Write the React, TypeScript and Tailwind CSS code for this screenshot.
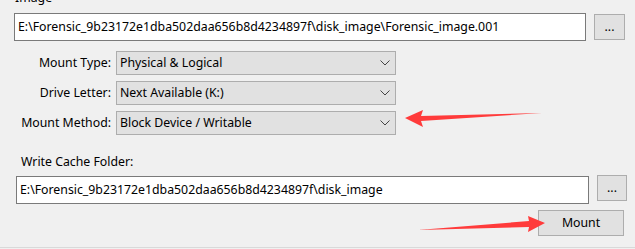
import React from "react";

const font = { fontFamily: '"Noto Sans", "Open Sans", sans-serif' };

function Chevron() {
  return (
    <svg width="10" height="6" viewBox="0 0 10 6" className="block">
      <path d="M0.5 0.5 L5 5 L9.5 0.5" fill="none" stroke="#444" strokeWidth="1" />
    </svg>
  );
}

function Combo({ text }: { text: string }) {
  return (
    <div className="w-[280px] h-[24px] bg-[#e1e1e1] border border-[#adadad] flex items-center justify-between pl-[3px] pr-[5px]">
      <span className="text-[12.3px] text-black leading-none">{text}</span>
      <Chevron />
    </div>
  );
}

export default function App() {
  return (
    <div
      className="relative w-[635px] h-[249px] bg-[#f0f0f0] overflow-hidden text-black text-[12.3px]"
      style={font}
    >
      <div className="flex flex-col">
        <div className="pl-[15px] -mt-[10px] h-[23px] leading-[16px]">Image</div>
        <div className="flex items-center pl-[14px]">
          <div className="w-[572px] h-[28px] bg-white border border-[#7a7a7a] flex items-center pl-[3px] whitespace-nowrap overflow-hidden">
            E:\Forensic_9b23172e1dba502daa656b8d4234897f\disk_image\Forensic_image.001
          </div>
          <div className="ml-[8px] w-[31px] h-[26px] bg-[#e1e1e1] border border-[#adadad] flex items-center justify-center">
            ...
          </div>
        </div>
        <div className="mt-[10px] flex flex-col gap-[6px]">
          {[
            ["Mount Type:", "Physical & Logical"],
            ["Drive Letter:", "Next Available (K:)"],
            ["Mount Method:", "Block Device / Writable"],
          ].map(([l, v]) => (
            <div key={l} className="flex items-center">
              <div className="w-[111px] text-right whitespace-nowrap">{l}</div>
              <div className="ml-[5px]">
                <Combo text={v} />
              </div>
            </div>
          ))}
        </div>
        <div className="mt-[19px] pl-[21px] leading-[16px] h-[18px]">Write Cache Folder:</div>
        <div className="mt-[3px] flex items-start pl-[16px]">
          <div className="mt-[1px] w-[573px] h-[28px] bg-white border border-[#7a7a7a] flex items-center pl-[3px] whitespace-nowrap overflow-hidden">
            E:\Forensic_9b23172e1dba502daa656b8d4234897f\disk_image
          </div>
          <div className="ml-[8px] w-[30px] h-[26px] bg-[#e1e1e1] border border-[#adadad] flex items-center justify-center">
            ...
          </div>
        </div>
        <div className="mt-[6px] flex justify-end pr-[11px]">
          <div className="w-[86px] h-[26px] bg-[#e1e1e1] border border-[#adadad] flex items-center justify-center">
            Mount
          </div>
        </div>
      </div>
      <div className="absolute left-0 right-0 top-[247px] h-[1px] bg-[#d9d9d9]" />
      <svg className="absolute left-0 top-0" width="635" height="249">
        <path d="M405 118 L423 110 L421 116 L542 113 L421 121 L423 127 Z" fill="#ff3b3b" />
        <path d="M545 223 L528 216 L529 221 L418 230 L529 227 L528 232 Z" fill="#ff3b3b" />
      </svg>
    </div>
  );
}
